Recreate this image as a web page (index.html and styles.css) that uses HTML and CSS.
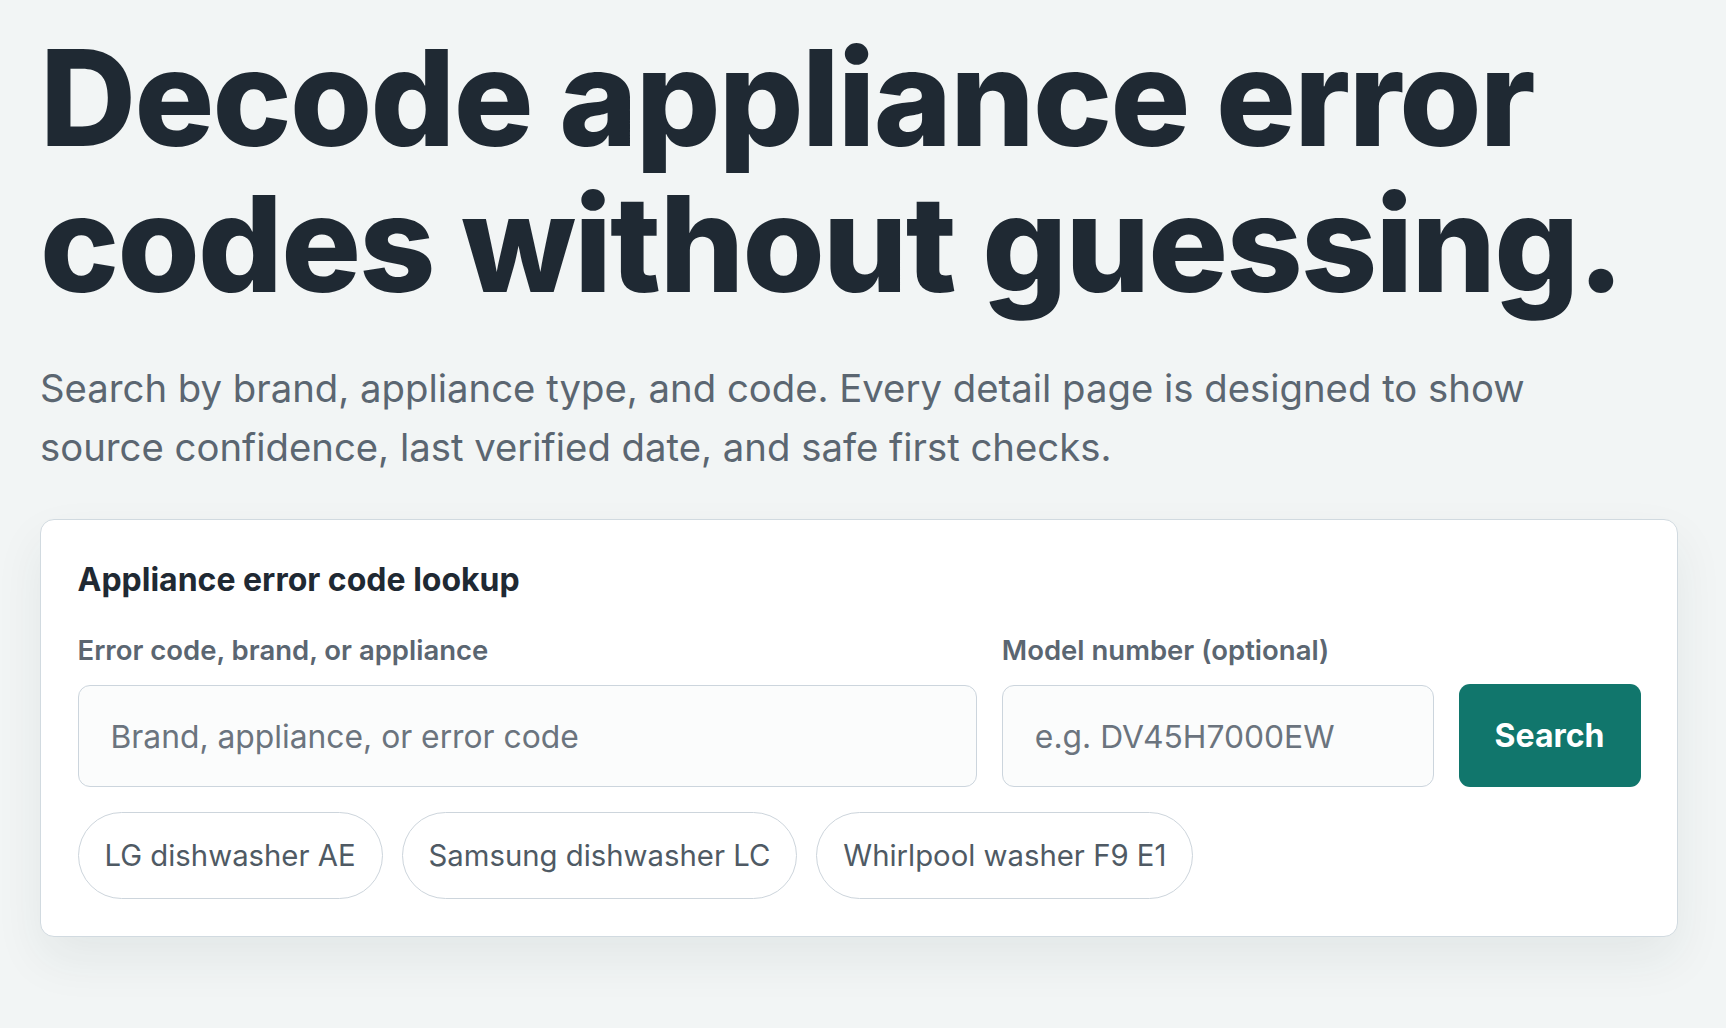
FILE: index.html
```html
<!DOCTYPE html>
<html lang="en">
<head>
<meta charset="utf-8">
<title>Decode appliance error codes</title>
<link rel="stylesheet" href="styles.css">
</head>
<body>
<main class="page">
  <section class="hero">
    <h1 class="hero-title">Decode appliance error codes without guessing.</h1>
    <p class="hero-lead">Search by brand, appliance type, and code. Every detail page is designed to show source confidence, last verified date, and safe first checks.</p>
    <form class="lookup" onsubmit="return false;">
      <h2 class="lookup-title">Appliance error code lookup</h2>
      <div class="lookup-grid">
        <label class="field-label" for="q">Error code, brand, or appliance</label>
        <label class="field-label" for="model">Model number (optional)</label>
        <span></span>
        <input class="field-input" id="q" type="text" placeholder="Brand, appliance, or error code">
        <input class="field-input" id="model" type="text" placeholder="e.g. DV45H7000EW">
        <button class="search-btn" type="submit">Search</button>
      </div>
      <div class="chips">
        <button class="chip" type="button">LG dishwasher AE</button>
        <button class="chip" type="button">Samsung dishwasher LC</button>
        <button class="chip" type="button">Whirlpool washer F9 E1</button>
      </div>
    </form>
  </section>
</main>
</body>
</html>
```

FILE: styles.css
```css
* { box-sizing: border-box; }

html, body {
  margin: 0;
  padding: 0;
  background: #f2f5f5;
  font-family: Inter, "Noto Sans", "Liberation Sans", sans-serif;
  color: #1f2933;
}

.page {
  padding: 25px 48px 60px 40px;
}

.hero-title {
  margin: 0;
  font-size: 133px;
  line-height: 146px;
  font-weight: 800;
  letter-spacing: -0.013em;
  color: #1f2933;
  max-width: 1600px;
}

.hero-lead {
  margin: 42px 0 0;
  font-size: 38.3px;
  line-height: 59px;
  font-weight: 400;
  color: #5b6671;
  max-width: 1560px;
}

.lookup {
  margin-top: 42px;
  background: #ffffff;
  border: 1.5px solid #d1dae0;
  border-radius: 14px;
  padding: 40px 36.5px 36.5px 36.5px;
  box-shadow: 0 22px 50px rgba(30, 50, 60, 0.07);
}

.lookup-title {
  margin: 0;
  font-size: 32px;
  line-height: 40px;
  font-weight: 700;
  color: #1f2933;
}

.lookup-grid {
  margin-top: 33px;
  display: grid;
  grid-template-columns: 898fr 431fr 182px;
  column-gap: 25px;
  row-gap: 17px;
  align-items: end;
}

.field-label {
  font-size: 27.5px;
  line-height: 34px;
  font-weight: 600;
  color: #5b6671;
}

.field-input {
  height: 102px;
  width: 100%;
  border: 1.5px solid #ccd5dd;
  border-radius: 12px;
  background: #fbfcfc;
  padding: 0 32px;
  font-family: inherit;
  font-size: 31.8px;
  color: #1f2933;
  outline: none;
}

.field-input::placeholder {
  color: #6b747e;
  opacity: 1;
}

.search-btn {
  height: 103px;
  border: none;
  border-radius: 11px;
  background: #11766c;
  color: #ffffff;
  font-family: inherit;
  font-size: 32px;
  font-weight: 700;
  cursor: pointer;
}

.chips {
  margin-top: 25px;
  display: flex;
  flex-wrap: wrap;
  gap: 19px;
}

.chip {
  height: 87px;
  padding: 0 26px;
  border: 1.5px solid #cdd5dc;
  border-radius: 999px;
  background: #ffffff;
  font-family: inherit;
  font-size: 29.3px;
  font-weight: 400;
  color: #4f5a64;
  cursor: pointer;
}
```
